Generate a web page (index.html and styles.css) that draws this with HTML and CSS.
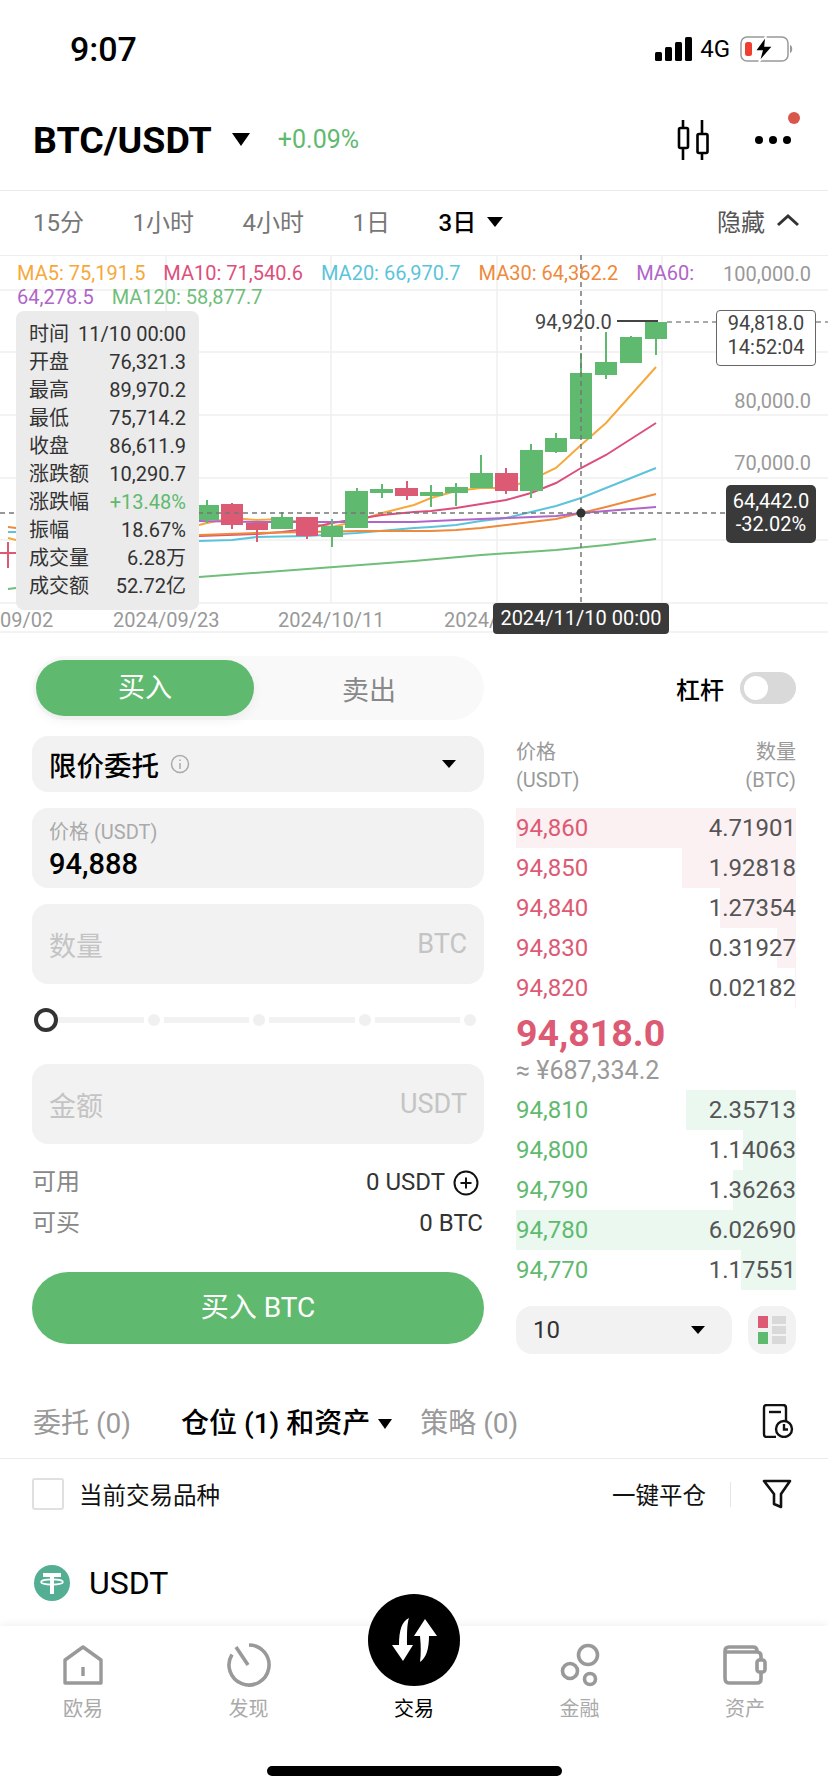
FILE: index.html
```html
<!DOCTYPE html>
<html lang="zh-CN">
<head>
  <meta charset="UTF-8" />
  <meta name="viewport" content="width=device-width, initial-scale=1.0"/>
  <title>BTC/USDT</title>
  <link rel="stylesheet" href="styles.css">
</head>
<body>
<div class="page">

  <div class="status">
    <span class="clock">9:07</span>
    <div class="status-right">
      <svg class="signal" width="37" height="24" viewBox="0 0 37 24"><rect x="0" y="15" width="7" height="9" rx="1.5"/><rect x="10" y="10" width="7" height="14" rx="1.5"/><rect x="20" y="5" width="7" height="19" rx="1.5"/><rect x="30" y="0" width="7" height="24" rx="1.5"/></svg>
      <span class="net">4G</span>
      <svg class="battery" width="54" height="26" viewBox="0 0 54 26"><rect x="1" y="1" width="47" height="24" rx="6" fill="none" stroke="#999" stroke-width="1.5"/><rect x="5" y="6" width="7" height="14" rx="2.5" fill="#ee4030"/><path d="M26 0 L15 15 H22 L19 26 L33 10 H25 Z" fill="#000" stroke="#fff" stroke-width="1.5"/><path d="M50 9 C53 10 53 16 50 17 Z" fill="#999"/></svg>
    </div>
  </div>

  <div class="head">
    <span class="pair">BTC/USDT</span>
    <i class="tri tri-big"></i>
    <span class="change">+0.09%</span>
    <div class="head-icons">
      <svg width="32" height="42" viewBox="0 0 32 42" fill="none" stroke="#000" stroke-width="2.6"><path d="M6 1 V9 M6 29 V41 M25 1 V15 M25 34 V41"/><rect x="2" y="9" width="9" height="20" rx="1.5"/><rect x="20.5" y="15" width="10" height="19" rx="1.5"/></svg>
      <div class="dots"><i></i><i></i><i></i></div>
      <i class="red-dot"></i>
    </div>
  </div>

  <div class="periods">
    <span>15分</span>
    <span>1小时</span>
    <span>4小时</span>
    <span>1日</span>
    <span class="on">3日<i class="tri tri-mid"></i></span>
    <span class="hide">隐藏<svg width="24" height="14" viewBox="0 0 24 14" fill="none" stroke="#333" stroke-width="3"><path d="M2 12 L12 3 L22 12"/></svg></span>
  </div>

  <div class="chart">
    <svg class="plot" width="828" height="378" viewBox="0 255 828 378">
      <g class="grid">
        <path d="M0 290H828M0 352H828M0 415H828M0 478H828M0 540H828M0 603H828M0 632H828"/>
        <path d="M166 255V603M331 255V603M497 255V603M662 255V603"/>
      </g>
      <g class="lines">
        <polyline stroke="#f5a93b" points="8,538 16,540 199,525 207,523 232,518 257,520 282,519 307,523 332,527 357,521 382,513 414,505 431,498 456,491 481,488 506,488 531,480 556,468 581,445 606,423 656,367"/>
        <polyline stroke="#dd4f7b" points="199,536 257,534 282,532 307,529 332,523 357,519 382,515 414,512 431,511 456,508 481,504 506,500 531,493 556,483 581,468 606,455 656,423"/>
        <polyline stroke="#5bc4db" points="8,532 16,532 199,541 232,540 257,537 307,536 357,533 414,528 431,527 456,525 481,521 506,518 531,512 556,506 581,498 656,468"/>
        <polyline stroke="#ee8a3c" points="8,527 16,528 199,535 257,533 307,532 357,531 414,531 431,531 456,530 481,528 506,525 556,519 581,513 606,507 656,494"/>
        <polyline stroke="#b065c8" points="199,521 257,522 307,522 357,522 414,522 456,520 506,518 556,516 581,513 656,507"/>
        <polyline stroke="#6fbe7a" points="8,589 16,588 199,577 414,561 481,555 556,550 606,545 656,539"/>
      </g>
      <g class="up">
        <path d="M656 339V355M631 336V338M606 332V379M581 353V374M556 433V453M531 444V498M481 455V474M456 483V506M431 485V507M382 484V498M357 488V492M332 519V547M282 512V518M207 500V523"/>
        <rect x="645" y="322" width="22" height="17"/>
        <rect x="620" y="337" width="22" height="26"/>
        <rect x="595" y="362" width="22" height="13"/>
        <rect x="570" y="373" width="22" height="66"/>
        <rect x="545" y="438" width="22" height="14"/>
        <rect x="520" y="450" width="23" height="41"/>
        <rect x="470" y="473" width="23" height="15"/>
        <rect x="445" y="487" width="23" height="6"/>
        <rect x="420" y="492" width="23" height="4"/>
        <rect x="370" y="489" width="23" height="4"/>
        <rect x="345" y="491" width="23" height="37"/>
        <rect x="321" y="526" width="22" height="11"/>
        <rect x="271" y="517" width="22" height="12"/>
        <rect x="199" y="505" width="20" height="15"/>
      </g>
      <g class="down">
        <path d="M506 468V494M407 481V500M307 517V539M257 530V542M232 503V529M8 542V568"/>
        <rect x="495" y="473" width="23" height="18"/>
        <rect x="395" y="488" width="23" height="8"/>
        <rect x="296" y="517" width="22" height="19"/>
        <rect x="246" y="523" width="22" height="7"/>
        <rect x="221" y="504" width="22" height="21"/>
        <rect x="0" y="552" width="16" height="2"/>
      </g>
      <path class="high" d="M617 321H658"/>
      <path class="dash-thin" d="M667 322H716M816 322H828"/>
      <path class="cross" d="M581 255V603M0 513H726"/>
      <circle cx="581" cy="513" r="4.5" fill="#333"/>
    </svg>

    <div class="legend">
      <span class="ma5">MA5: 75,191.5</span>
      <span class="ma10">MA10: 71,540.6</span>
      <span class="ma20">MA20: 66,970.7</span>
      <span class="ma30">MA30: 64,362.2</span>
      <span class="ma60">MA60:</span>
      <span class="ma60">64,278.5</span>
      <span class="ma120">MA120: 58,877.7</span>
    </div>

    <div class="axis axis-100">100,000.0</div>
    <div class="axis axis-80">80,000.0</div>
    <div class="axis axis-70">70,000.0</div>

    <div class="high-label">94,920.0</div>
    <div class="last-box">94,818.0<br>14:52:04</div>
    <div class="cross-box">64,442.0<br>-32.02%</div>

    <div class="tip">
      <div class="tip-row"><span>时间</span><span>11/10 00:00</span></div>
      <div class="tip-row"><span>开盘</span><span>76,321.3</span></div>
      <div class="tip-row"><span>最高</span><span>89,970.2</span></div>
      <div class="tip-row"><span>最低</span><span>75,714.2</span></div>
      <div class="tip-row"><span>收盘</span><span>86,611.9</span></div>
      <div class="tip-row"><span>涨跌额</span><span>10,290.7</span></div>
      <div class="tip-row"><span>涨跌幅</span><span class="green">+13.48%</span></div>
      <div class="tip-row"><span>振幅</span><span>18.67%</span></div>
      <div class="tip-row"><span>成交量</span><span>6.28万</span></div>
      <div class="tip-row"><span>成交额</span><span>52.72亿</span></div>
    </div>

    <span class="date date-1">09/02</span>
    <span class="date date-2">2024/09/23</span>
    <span class="date date-3">2024/10/11</span>
    <span class="date date-4">2024/</span>
    <div class="date-box">2024/11/10 00:00</div>
  </div>

  <div class="trade">
    <div class="form">
      <div class="side">
        <span class="side-on">买入</span>
        <span class="side-off">卖出</span>
      </div>
      <div class="box select">
        <b>限价委托</b>
        <svg class="info" width="20" height="20" viewBox="0 0 20 20" fill="none" stroke="#aaa" stroke-width="1.5"><circle cx="10" cy="10" r="8.5"/><path d="M10 9V15M10 5.5V7"/></svg>
        <i class="tri tri-small"></i>
      </div>
      <div class="box field price">
        <label>价格 (USDT)</label>
        <strong>94,888</strong>
      </div>
      <div class="box field empty"><span>数量</span><span>BTC</span></div>
      <div class="slider">
        <i class="knob"></i>
        <i class="seg"></i><i class="stop"></i>
        <i class="seg"></i><i class="stop"></i>
        <i class="seg"></i><i class="stop"></i>
        <i class="seg"></i><i class="stop"></i>
      </div>
      <div class="box field empty"><span>金额</span><span>USDT</span></div>
      <div class="funds">
        <div class="fund"><span>可用</span><em>0 USDT<svg width="26" height="26" viewBox="0 0 26 26" fill="none" stroke="#111" stroke-width="2"><circle cx="13" cy="13" r="11.5"/><path d="M7.5 13H18.5M13 7.5V18.5"/></svg></em></div>
        <div class="fund"><span>可买</span><em>0 BTC</em></div>
      </div>
      <div class="buy">买入 BTC</div>
    </div>

    <div class="book">
      <div class="margin">
        <span>杠杆</span>
        <i class="switch"><i></i></i>
      </div>
      <div class="book-head">
        <span>价格<br>(USDT)</span>
        <span class="right">数量<br>(BTC)</span>
      </div>
      <div class="rows asks">
        <div class="row"><i class="bar" style="width:280px"></i><span class="p">94,860</span><span class="q">4.71901</span></div>
        <div class="row"><i class="bar" style="width:114px"></i><span class="p">94,850</span><span class="q">1.92818</span></div>
        <div class="row"><i class="bar" style="width:76px"></i><span class="p">94,840</span><span class="q">1.27354</span></div>
        <div class="row"><i class="bar" style="width:19px"></i><span class="p">94,830</span><span class="q">0.31927</span></div>
        <div class="row"><i class="bar" style="width:1px"></i><span class="p">94,820</span><span class="q">0.02182</span></div>
      </div>
      <div class="mid">94,818.0</div>
      <div class="cny">≈ ¥687,334.2</div>
      <div class="rows bids">
        <div class="row"><i class="bar" style="width:110px"></i><span class="p">94,810</span><span class="q">2.35713</span></div>
        <div class="row"><i class="bar" style="width:53px"></i><span class="p">94,800</span><span class="q">1.14063</span></div>
        <div class="row"><i class="bar" style="width:63px"></i><span class="p">94,790</span><span class="q">1.36263</span></div>
        <div class="row"><i class="bar" style="width:280px"></i><span class="p">94,780</span><span class="q">6.02690</span></div>
        <div class="row"><i class="bar" style="width:55px"></i><span class="p">94,770</span><span class="q">1.17551</span></div>
      </div>
      <div class="depth">
        <div class="depth-select"><span>10</span><i class="tri tri-small"></i></div>
        <div class="depth-btn">
          <svg width="28" height="28" viewBox="0 0 28 28"><rect x="0" y="0" width="10" height="12" fill="#dd5a74"/><rect x="0" y="16" width="10" height="12" fill="#5fba6f"/><rect x="14" y="0" width="14" height="8" fill="#d9d9d9"/><rect x="14" y="10" width="14" height="8" fill="#d9d9d9"/><rect x="14" y="20" width="14" height="8" fill="#d9d9d9"/></svg>
        </div>
      </div>
    </div>
  </div>

  <div class="orders">
    <span>委托 (0)</span>
    <span class="orders-on">仓位 (1) 和资产<i class="tri tri-tiny"></i></span>
    <span>策略 (0)</span>
    <svg class="orders-icon" width="32" height="34" viewBox="0 0 32 34" fill="none" stroke="#111" stroke-width="2.4"><path d="M14 33 H5 Q2 33 2 30 V4 Q2 1 5 1 H21 Q24 1 24 4 V17"/><path d="M7 8H19"/><circle cx="22" cy="25" r="8"/><path d="M22 20V25.5H26"/></svg>
  </div>

  <div class="filter">
    <i class="check"></i>
    <span class="only">当前交易品种</span>
    <span class="close-all">一键平仓</span>
    <i class="split"></i>
    <svg width="30" height="30" viewBox="0 0 30 30" fill="none" stroke="#111" stroke-width="2.6" stroke-linejoin="round"><path d="M2 2 H28 L19 15 V28 L12 25 V15 Z"/></svg>
  </div>

  <div class="asset">
    <svg width="36" height="36" viewBox="0 0 36 36"><circle cx="18" cy="18" r="18" fill="#53ae94"/><rect x="9" y="8" width="18" height="4" fill="#fff"/><rect x="16" y="8" width="4" height="21" fill="#fff"/><ellipse cx="18" cy="17" rx="11" ry="2.6" fill="none" stroke="#fff" stroke-width="1.6"/></svg>
    <span>USDT</span>
  </div>

  <div class="nav">
    <div class="nav-item">
      <svg width="40" height="40" viewBox="0 0 40 40" fill="none" stroke="#999" stroke-width="3.4" stroke-linejoin="round"><path d="M2 38 V15 L20 2 L38 15 V38 Z"/><path d="M20 22 V31"/></svg>
      <span>欧易</span>
    </div>
    <div class="nav-item">
      <svg width="44" height="44" viewBox="0 0 44 44" fill="none" stroke="#999" stroke-width="3.6"><path d="M22 2 A20 20 0 1 1 5 11.5"/><path d="M9 4 L21 22"/></svg>
      <span>发现</span>
    </div>
    <div class="nav-item nav-on">
      <span>交易</span>
      <svg class="trade-btn" width="92" height="92" viewBox="0 0 92 92"><circle cx="46" cy="46" r="46" fill="#000"/><path d="M24 51 H45 L35 67 Z M41 24 C34 27 31 36 31 51 H39 C39 38 39 30 41 24 Z" fill="#fff"/><path d="M57 25 L46 42 H69 Z M52 42 H61 C61 55 58 64 52 68 C53 60 53 52 52 42 Z" fill="#fff"/></svg>
    </div>
    <div class="nav-item">
      <svg width="40" height="44" viewBox="0 0 40 44" fill="none" stroke="#999" stroke-width="3.6"><circle cx="28" cy="12" r="9.5"/><circle cx="10" cy="28" r="7.5"/><circle cx="30" cy="36" r="5.5"/></svg>
      <span>金融</span>
    </div>
    <div class="nav-item">
      <svg width="44" height="40" viewBox="0 0 44 40" fill="none" stroke="#999" stroke-width="3.6" stroke-linejoin="round"><path d="M2 6 Q2 2 6 2 H30 Q34 2 34 6"/><path d="M2 6 V33 Q2 38 6 38 H34 Q38 38 38 34 V27 M38 15 V11 Q38 7 34 7 H2"/><rect x="34" y="15" width="8" height="12" rx="2.5"/></svg>
      <span>资产</span>
    </div>
    <i class="home-bar"></i>
  </div>

</div>
</body>
</html>
```

FILE: styles.css
```css
* {
  box-sizing: border-box;
}

body {
  margin: 0;
  background: #fff;
  font-family: Roboto, "Noto Sans CJK SC", sans-serif;
  color: #111;
}

i, em {
  font-style: normal;
}

.page {
  width: 828px;
  height: 1792px;
  overflow: hidden;
  display: flex;
  flex-direction: column;
}

.tri {
  display: inline-block;
  width: 0;
  height: 0;
  border-style: solid;
  border-color: #000 transparent transparent;
}

.tri-big {
  border-width: 13px 9px 0;
  margin-left: 20px;
}

.tri-mid {
  border-width: 10px 8px 0;
  margin-left: 11px;
  vertical-align: 4px;
}

.tri-small {
  border-width: 8px 7px 0;
}

.tri-tiny {
  border-width: 10px 7px 0;
  margin-left: 8px;
  vertical-align: 4px;
}

/* status bar */
.status {
  height: 90px;
  padding: 8px 34px 0 70px;
  display: flex;
  align-items: center;
  justify-content: space-between;
}

.clock {
  font-size: 34px;
  font-weight: 500;
  line-height: 80px;
  color: #000;
}

.status-right {
  display: flex;
  align-items: center;
}

.signal {
  fill: #000;
}

.net {
  font-size: 24px;
  margin: 0 10px 0 8px;
  color: #000;
}

/* pair header */
.head {
  height: 101px;
  padding-left: 33px;
  padding-bottom: 1px;
  display: flex;
  align-items: center;
  border-bottom: 1px solid #ebebeb;
}

.pair {
  font-size: 37.5px;
  font-weight: 700;
  color: #000;
}

.change {
  font-size: 25px;
  color: #5fba6f;
  margin-left: 28px;
}

.head-icons {
  margin-left: auto;
  margin-right: 37px;
  display: flex;
  align-items: center;
  gap: 46px;
  position: relative;
}

.dots {
  display: flex;
  gap: 6px;
}

.dots i {
  width: 8px;
  height: 8px;
  border-radius: 50%;
  background: #000;
}

.red-dot {
  position: absolute;
  right: -9px;
  top: -7px;
  width: 12px;
  height: 12px;
  border-radius: 50%;
  background: #d9574a;
}

/* period tabs */
.periods {
  height: 64px;
  padding: 0 28px 6px 33px;
  display: flex;
  align-items: center;
  gap: 48.5px;
  font-size: 24px;
  color: #777;
}

.periods .on {
  color: #000;
  font-weight: 500;
}

.periods .hide {
  margin-left: auto;
  color: #555;
  display: flex;
  align-items: center;
  gap: 11px;
}

/* chart */
.chart {
  position: relative;
  height: 378px;
  font-size: 20px;
  border-top: 1px solid #eee;
}

.plot {
  position: absolute;
  left: 0;
  top: -1px;
}

.grid path {
  fill: none;
  stroke: #f0f0f0;
  stroke-width: 1.5;
}

.lines polyline {
  fill: none;
  stroke-width: 2;
}

.up {
  fill: #5fba6f;
}

.up path {
  stroke: #5fba6f;
  stroke-width: 2;
}

.down {
  fill: #dd5a74;
}

.down path {
  stroke: #dd5a74;
  stroke-width: 2;
}

.high {
  stroke: #444;
  stroke-width: 2;
}

.dash-thin {
  stroke: #555;
  stroke-width: 1;
  stroke-dasharray: 5 4;
}

.cross {
  stroke: #777;
  stroke-width: 1.5;
  stroke-dasharray: 5 4;
  fill: none;
}

.legend {
  position: absolute;
  left: 17px;
  top: 5px;
  width: 700px;
  line-height: 24px;
}

.legend span {
  margin-right: 13px;
}

.ma5 { color: #f5a93b; }
.ma10 { color: #dd4f7b; }
.ma20 { color: #5bc4db; }
.ma30 { color: #ee8a3c; }
.ma60 { color: #b065c8; }
.ma120 { color: #6fbe7a; }

.axis {
  position: absolute;
  right: 17px;
  line-height: 24px;
  color: #999;
}

.axis-100 { top: 6px; }
.axis-80 { top: 133px; }
.axis-70 { top: 195px; }

.high-label {
  position: absolute;
  left: 535px;
  top: 54px;
  line-height: 24px;
  color: #444;
}

.last-box {
  position: absolute;
  left: 716px;
  top: 54px;
  width: 100px;
  height: 56px;
  background: #fff;
  border: 1px solid #666;
  border-radius: 4px;
  text-align: center;
  line-height: 24px;
  color: #444;
}

.cross-box {
  position: absolute;
  left: 726px;
  top: 229px;
  width: 90px;
  height: 58px;
  background: #3a3a3a;
  border-radius: 5px;
  text-align: center;
  line-height: 23px;
  padding-top: 5px;
  color: #fff;
}

.tip {
  position: absolute;
  left: 16px;
  top: 55px;
  width: 183px;
  height: 299px;
  padding: 9px 13px;
  background: #ebebeb;
  border-radius: 8px;
  color: #333;
}

.tip-row {
  display: flex;
  justify-content: space-between;
  line-height: 28px;
}

.green {
  color: #5fba6f;
}

.date {
  position: absolute;
  top: 352px;
  line-height: 24px;
  color: #999;
}

.date-1 { left: 0; }
.date-2 { left: 113px; }
.date-3 { left: 278px; }
.date-4 { left: 444px; }

.date-box {
  position: absolute;
  left: 493px;
  top: 347px;
  width: 176px;
  height: 31px;
  background: #3a3a3a;
  border-radius: 4px;
  color: #fff;
  text-align: center;
  line-height: 31px;
}

/* trade panel */
.trade {
  display: flex;
  gap: 32px;
  padding: 0 32px;
}

.form {
  width: 452px;
  padding-top: 23px;
}

.side {
  height: 64px;
  margin-left: 1px;
  padding: 4px 0 4px 3px;
  display: flex;
  align-items: center;
  background: #f9f9f9;
  border-radius: 32px;
  font-size: 27px;
}

.side-on {
  width: 218px;
  height: 56px;
  line-height: 56px;
  text-align: center;
  color: #fff;
  background: #5fba6f;
  border-radius: 28px;
  box-shadow: 0 4px 12px rgba(0,0,0,0.06);
}

.side-off {
  flex: 1;
  text-align: center;
  color: #888;
}

.box {
  background: #f2f2f2;
  border-radius: 16px;
  margin-top: 16px;
}

.select {
  height: 56px;
  padding: 0 28px 0 17px;
  display: flex;
  align-items: center;
  font-size: 27.5px;
}

.select b {
  font-weight: 500;
  color: #000;
}

.info {
  margin-left: 11px;
}

.select .tri {
  margin-left: auto;
}

.field {
  height: 80px;
  padding: 0 17px;
}

.price label {
  display: block;
  padding-top: 12px;
  font-size: 20px;
  line-height: 24px;
  color: #aaa;
}

.price strong {
  display: block;
  margin-top: 4px;
  font-size: 29px;
  font-weight: 500;
  line-height: 32px;
  color: #000;
}

.empty {
  display: flex;
  align-items: center;
  justify-content: space-between;
  font-size: 27px;
  color: #c4c4c4;
}

.slider {
  height: 72px;
  padding-right: 8px;
  margin-bottom: -8px;
  display: flex;
  align-items: center;
  position: relative;
}

.knob {
  width: 24px;
  height: 24px;
  margin-left: 2px;
  border: 4px solid #333;
  border-radius: 50%;
  background: #fff;
  flex: none;
}

.seg {
  height: 6px;
  background: #f2f2f2;
  flex: 1;
  margin: 0 4px;
}

.knob + .seg {
  margin-left: 0;
}

.stop {
  width: 12px;
  height: 12px;
  border-radius: 50%;
  background: #f0f0f0;
  flex: none;
}

.funds {
  margin-top: 18px;
  font-size: 24px;
}

.fund {
  display: flex;
  justify-content: space-between;
  line-height: 41px;
  color: #888;
}

.fund em {
  color: #333;
  display: flex;
  align-items: center;
  gap: 8px;
  padding-right: 1px;
}

.fund svg {
  margin-right: 4px;
}

.buy {
  height: 72px;
  margin-top: 28px;
  border-radius: 36px;
  background: #5fba6f;
  color: #fff;
  font-size: 28px;
  line-height: 72px;
  text-align: center;
}

/* order book */
.book {
  width: 280px;
  padding-top: 39px;
}

.margin {
  height: 32px;
  display: flex;
  align-items: center;
  justify-content: flex-end;
  gap: 16px;
  font-size: 24px;
  font-weight: 500;
  color: #000;
}

.switch {
  width: 56px;
  height: 32px;
  padding: 4px;
  border-radius: 16px;
  background: #d9d9d9;
}

.switch i {
  display: block;
  width: 24px;
  height: 24px;
  border-radius: 50%;
  background: #fff;
}

.book-head {
  margin-top: 34px;
  display: flex;
  justify-content: space-between;
  font-size: 20px;
  line-height: 28px;
  color: #999;
}

.right {
  text-align: right;
}

.asks {
  margin-top: 14px;
}

.row {
  position: relative;
  height: 40px;
  display: flex;
  justify-content: space-between;
  align-items: center;
  font-size: 24px;
}

.bar {
  position: absolute;
  right: 0;
  top: 0;
  bottom: 0;
}

.asks .bar {
  background: #fbf0f2;
}

.bids .bar {
  background: #eaf8f0;
}

.row span {
  position: relative;
}

.asks .p {
  color: #dd5a74;
}

.bids .p {
  color: #5fba6f;
}

.q {
  color: #555;
}

.mid {
  margin-top: 3px;
  font-size: 37.5px;
  font-weight: 700;
  line-height: 44px;
  color: #dd5a74;
}

.cny {
  font-size: 25px;
  line-height: 31px;
  color: #999;
}

.bids {
  margin-top: 4px;
}

.depth {
  margin-top: 16px;
  display: flex;
  justify-content: space-between;
}

.depth-select {
  width: 216px;
  height: 48px;
  padding: 0 27px 0 17px;
  display: flex;
  align-items: center;
  justify-content: space-between;
  background: #f2f2f2;
  border-radius: 16px;
  font-size: 24px;
  color: #333;
}

.depth-btn {
  width: 48px;
  height: 48px;
  display: flex;
  align-items: center;
  justify-content: center;
  background: #f2f2f2;
  border-radius: 16px;
}

/* orders */
.orders {
  height: 73px;
  margin-top: 32px;
  padding: 0 34px 3px 33px;
  display: flex;
  align-items: center;
  gap: 50px;
  font-size: 28px;
  color: #999;
  border-bottom: 1px solid #ebebeb;
}

.orders-on {
  color: #000;
  font-weight: 500;
  margin-right: -22px;
}

.orders-icon {
  margin-left: auto;
}

.filter {
  height: 70px;
  padding: 0 36px 0 32px;
  display: flex;
  align-items: center;
  font-size: 23.5px;
  color: #111;
}

.check {
  width: 32px;
  height: 32px;
  border: 2px solid #e0e0e0;
  border-radius: 3px;
}

.only {
  margin-left: 15px;
}

.close-all {
  margin-left: auto;
}

.split {
  width: 1px;
  height: 25px;
  background: #e6e6e6;
  margin: 0 31px 0 24px;
}

.asset {
  margin-top: 34px;
  padding-left: 34px;
  height: 40px;
  display: flex;
  align-items: center;
  gap: 19px;
  font-size: 32px;
  color: #000;
}

/* bottom nav */
.nav {
  margin-top: auto;
  height: 166px;
  position: relative;
  padding: 16px 31px 0;
  display: flex;
  justify-content: space-between;
  background: #fff;
  box-shadow: 0 -2px 8px rgba(0,0,0,0.06);
}

.nav-item {
  width: 104px;
  height: 81px;
  display: grid;
  grid-template-rows: 46px 28px;
  row-gap: 7px;
  justify-items: center;
  align-items: center;
  position: relative;
  font-size: 20px;
  line-height: 28px;
  color: #aaa;
}

.nav-item span {
  grid-row: 2;
}

.nav-on {
  color: #000;
}

.trade-btn {
  position: absolute;
  left: 6px;
  top: -48px;
}

.home-bar {
  position: absolute;
  left: 267px;
  top: 140px;
  width: 295px;
  height: 10px;
  border-radius: 5px;
  background: #000;
}
```
